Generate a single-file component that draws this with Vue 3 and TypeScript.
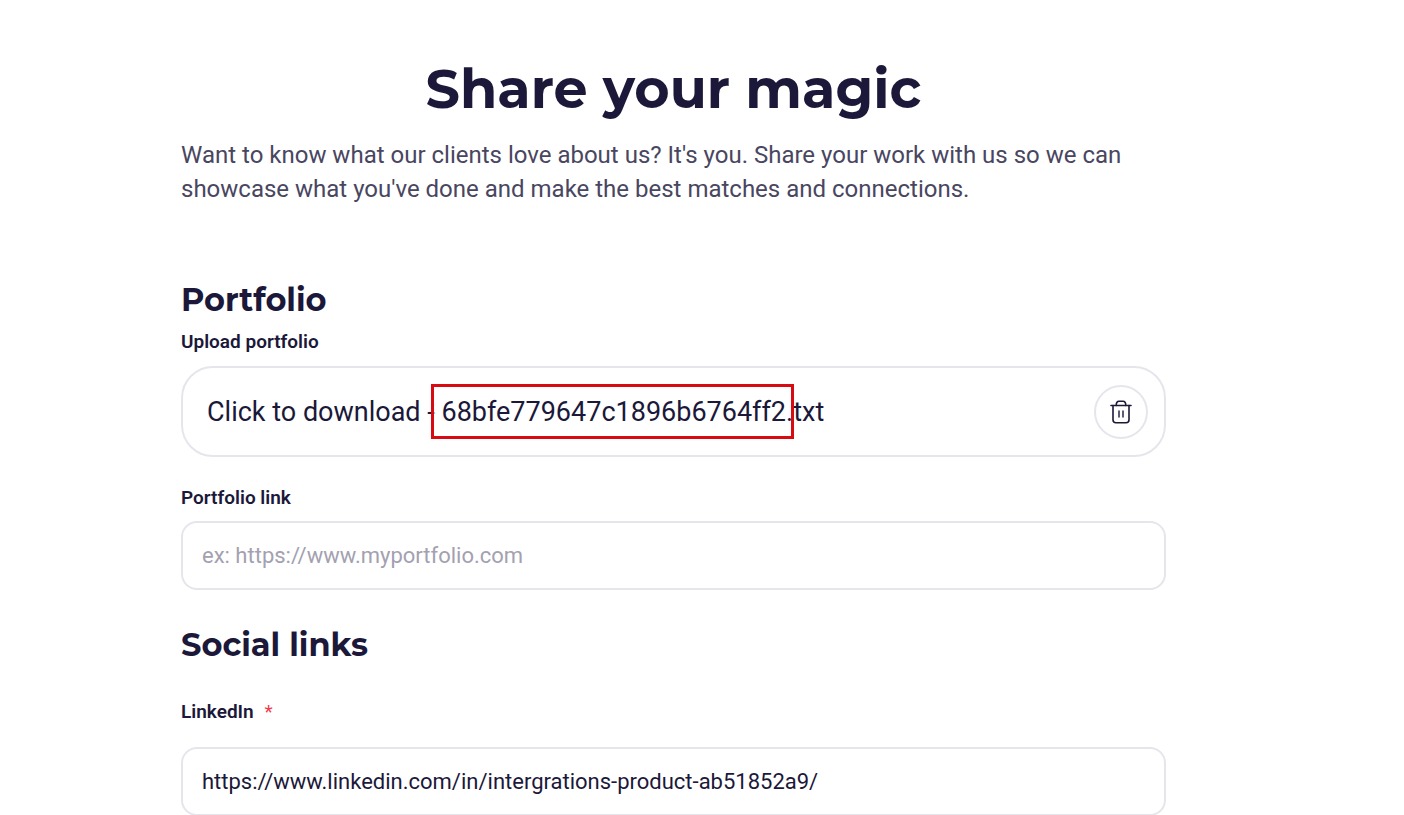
<script setup lang="ts">
import { ref } from 'vue'

const fileId = '68bfe779647c1896b6764ff2'
const portfolioLink = ref('')
const linkedin = ref('https://www.linkedin.com/in/intergrations-product-ab51852a9/')
</script>

<template>
  <main class="page">
    <header class="intro">
      <h1>Share your magic</h1>
      <p>
        Want to know what our clients love about us? It's you. Share your work with us so we can
        showcase what you've done and make the best matches and connections.
      </p>
    </header>

    <section class="portfolio">
      <h2>Portfolio</h2>
      <div id="upload-label" class="label">Upload portfolio</div>
      <div class="file" role="group" aria-labelledby="upload-label">
        <a class="download" href="#">Click to download - <span class="file-id">{{ fileId }}</span>.txt</a>
        <button class="remove" type="button" aria-label="Remove file">
          <svg viewBox="0 0 24 26" width="24" height="26" fill="none" stroke="currentColor" stroke-width="1.6" stroke-linecap="round" stroke-linejoin="round">
            <path d="M2 6.500H22" />
            <path d="M4 6.500V20.800Q4 23.800 7 23.800H17Q20 23.800 20 20.800V6.500" />
            <path d="M7.200 6.500Q7.200 2.200 10 2.200H14Q16.800 2.200 16.800 6.500" />
            <path d="M10 12V18M14 12V18" stroke-width="1.400" />
          </svg>
        </button>
      </div>
      <label class="label" for="portfolio-link">Portfolio link</label>
      <input id="portfolio-link" v-model="portfolioLink" class="field" type="text" placeholder="ex: https://www.myportfolio.com" />
    </section>

    <section class="social">
      <h2>Social links</h2>
      <label class="label" for="linkedin">LinkedIn <span class="required">*</span></label>
      <input id="linkedin" v-model="linkedin" class="field" type="text" required />
    </section>
  </main>
</template>

<style>
body {
  margin: 0;
  background: #fff;
}
html {
  scrollbar-width: none;
}
</style>

<style scoped>
.page {
  box-sizing: border-box;
  padding: 56px 238px 0 181px;
  color: #1b1839;
  font-family: Roboto, sans-serif;
}
h1,
h2 {
  margin: 0;
  font-family: Montserrat, Inter, sans-serif;
  font-weight: 700;
}
h1 {
  font-size: 54px;
  line-height: 66px;
  text-align: center;
}
h2 {
  font-size: 32px;
  line-height: 40px;
}
.intro p {
  margin: 16px 0 0;
  color: #494661;
  font-size: 24px;
  line-height: 34px;
}
.portfolio {
  margin-top: 74px;
}
.label {
  display: block;
  font-size: 19px;
  font-weight: 600;
  line-height: 24px;
}
.portfolio h2 + .label {
  margin-top: 10px;
}
.file {
  display: flex;
  align-items: center;
  justify-content: space-between;
  box-sizing: border-box;
  min-height: 91px;
  margin: 12px 0 29px;
  padding: 0 16px 0 24px;
  border: 2px solid #e6e5ec;
  border-radius: 32px;
}
.download {
  color: inherit;
  font-size: 27px;
  line-height: 36px;
  text-decoration: none;
}
.file-id {
  position: relative;
}
.file-id::after {
  content: '';
  position: absolute;
  inset: -12px -8px -11px -10px;
  border: 3px solid #d90b12;
}
.remove {
  display: flex;
  align-items: center;
  justify-content: center;
  width: 54px;
  height: 54px;
  padding: 0;
  border: 2px solid #e6e5ec;
  border-radius: 50%;
  background: #fff;
  color: #1b1839;
}
.field {
  display: block;
  box-sizing: border-box;
  width: 100%;
  height: 69px;
  margin-top: 11px;
  padding: 0 19px;
  border: 2px solid #e6e5ec;
  border-radius: 16px;
  outline: none;
  background: #fff;
  color: #1b1839;
  font-family: inherit;
  font-size: 22px;
}
.field::placeholder {
  color: #a3a1b0;
  opacity: 1;
}
.social {
  margin-top: 35px;
}
.social .label {
  margin-top: 35px;
}
.social .field {
  margin-top: 23px;
}
.required {
  margin-left: 6px;
  color: #f5384d;
  font-weight: 400;
}
</style>
